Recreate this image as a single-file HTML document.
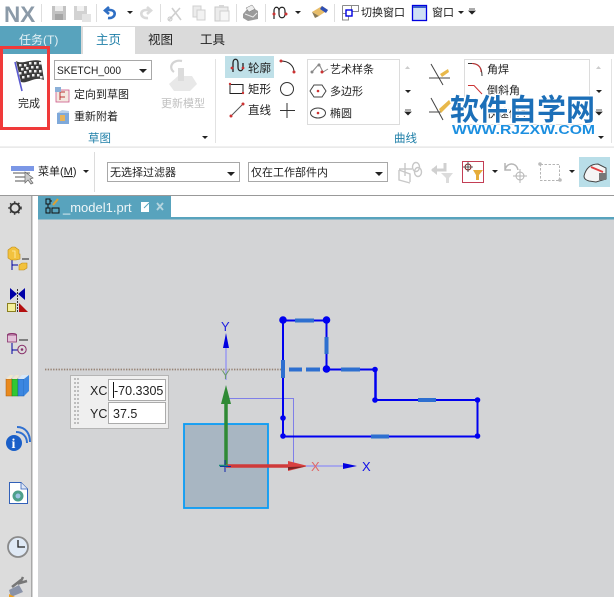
<!DOCTYPE html>
<html><head><meta charset="utf-8">
<style>
html,body{margin:0;padding:0;background:#fff;width:614px;height:597px;overflow:hidden}
svg{display:block;position:absolute;left:0;top:0}
text{font-family:"Liberation Sans","Noto Sans CJK SC",sans-serif;font-size:11px;fill:#222}
.g{fill:#c0c0c0}
.t{fill:#1f7fa8;font-size:11.500px}
.c{font-size:11px;fill:#222}
</style></head><body>
<svg width="614" height="597" viewBox="0 0 614 597">
<rect width="614" height="597" fill="#fff"/>
<!-- QAT -->
<text x="4" y="22" style="font-size:22.500px;font-weight:bold;fill:#8b9aa8">NX</text>
<g stroke="#dedede"><path d="M41.500 4V22M96.500 4V22M160.500 4V22M236.500 4V22M265.500 4V22M334.500 4V22"/></g>
<rect x="52" y="6" width="14" height="14" fill="#c2c2c2"/><rect x="55" y="6" width="8" height="5" fill="#ececec"/><rect x="55" y="14" width="8" height="6" fill="#a5a5a5"/>
<rect x="74" y="6" width="13" height="14" fill="#d2d2d2"/><rect x="77" y="6" width="7" height="5" fill="#f2f2f2"/><rect x="82" y="14" width="9" height="8" fill="#e4e4e4"/>
<path d="M108 18C116 19 117 10 110 10L106 10M109 7L105 10.500L109 14" fill="none" stroke="#2f6fc4" stroke-width="2.600"/>
<path d="M127 11l6 0l-3 3z" fill="#222"/>
<path d="M148 18C140 19 139 10 146 10L150 10M147 7L151 10.500L147 14" fill="none" stroke="#dadada" stroke-width="2.600"/>
<path d="M169 20L180 8M181 20L172 8" stroke="#cfcfcf" stroke-width="1.600"/><circle cx="170" cy="19" r="2" fill="none" stroke="#c8c8c8"/>
<rect x="193" y="6" width="8" height="11" fill="#ececec" stroke="#d0d0d0"/><rect x="197" y="10" width="8" height="10" fill="#f2f2f2" stroke="#d0d0d0"/>
<rect x="215" y="7" width="13" height="14" fill="#ececec" stroke="#c8c8c8"/><rect x="219" y="5" width="5" height="3" fill="#d8d8d8"/><rect x="220" y="11" width="9" height="10" fill="#f6f6f6" stroke="#d0d0d0"/>
<path d="M243 14L250 6L258 11L258 19L248 21L243 18Z" fill="#9a9a9a"/><path d="M246 8L252 5L255 9L249 12Z" fill="#eee" stroke="#777" stroke-width=".5"/><path d="M245 14L253 17L257 13" fill="none" stroke="#e8e8e8"/>
<path d="M274 19V11C274 6 279 6 279 11V14C279 19 285 19 285 14V11C285 6 279 6 279 11" fill="none" stroke="#222" stroke-width="1.200"/><circle cx="274" cy="14" r="1.500" fill="#c33"/><circle cx="286" cy="14" r="1.500" fill="#c33"/>
<path d="M295 11l6 0l-3 3z" fill="#222"/>
<path d="M312 12L322 6L328 10L319 16Z" fill="#e7bd6a"/><path d="M322 6L328 10L326 13L320 9Z" fill="#2e4fb5"/><path d="M312 12L319 16L315 18Z" fill="#8a7a55"/>
<path d="M342.500 5.500h9v5M351.500 5.500h7v6h-6M342.500 5.500v8h5M342.500 13.500v6.500h6v-5" fill="none" stroke="#8a8a8a"/><rect x="346" y="10" width="6" height="6" fill="#fff" stroke="#0000e0" stroke-width="1.400"/>
<text x="361" y="16" class="c">切换窗口</text>
<rect x="412.500" y="5.500" width="14" height="15" fill="#cfe0f5" stroke="#0000e0" stroke-width="1.300"/><rect x="413" y="6" width="13" height="2" fill="#3a5fcf"/>
<text x="432" y="16" class="c">窗口</text>
<path d="M458 11l6 0l-3 3z" fill="#222"/>
<path d="M469 9h6M469 11l6 0l-3 3z" stroke="#222" fill="#222" stroke-width=".8"/>
<!-- tab row -->
<rect y="26" width="614" height="28" fill="#dadada"/>
<rect y="26" width="81" height="28" fill="#58a3bd"/>
<text x="19" y="44" style="font-size:12px;fill:#e4f1f5">任务(T)</text>
<rect x="83" y="27" width="52" height="27" fill="#fff"/>
<text x="96" y="44" style="font-size:12.500px;fill:#1f7fa8">主页</text>
<text x="148" y="44" style="font-size:12.500px">视图</text>
<text x="200" y="44" style="font-size:12.500px">工具</text>
<!-- ribbon -->
<rect y="146.500" width="614" height="1.200" fill="#e2e2e2"/>
<path d="M215.500 59V143M611.500 59V143" stroke="#e2e2e2"/>
<!-- flag -->
<path d="M22 91L15 62" stroke="#5a5ad0" stroke-width="1.600"/>
<path d="M16 61C23 65 31 58 41 61L44 80C34 76 28 84 21 82Z" fill="#3c3c3c"/>
<g fill="#eee"><rect x="19" y="64" width="2.500" height="2.500"/><rect x="24" y="64" width="2.500" height="2.500"/><rect x="29" y="62" width="2.500" height="2.500"/><rect x="34" y="62" width="2.500" height="2.500"/><rect x="39" y="62" width="2.500" height="2.500"/><rect x="21" y="68" width="2.500" height="2.500"/><rect x="26" y="67" width="2.500" height="2.500"/><rect x="31" y="66" width="2.500" height="2.500"/><rect x="36" y="66" width="2.500" height="2.500"/><rect x="19" y="72" width="2.500" height="2.500"/><rect x="24" y="71" width="2.500" height="2.500"/><rect x="29" y="70" width="2.500" height="2.500"/><rect x="34" y="70" width="2.500" height="2.500"/><rect x="39" y="70" width="2.500" height="2.500"/><rect x="22" y="76" width="2.500" height="2.500"/><rect x="27" y="75" width="2.500" height="2.500"/><rect x="32" y="74" width="2.500" height="2.500"/><rect x="37" y="74" width="2.500" height="2.500"/><rect x="40" y="76" width="2.500" height="2.500"/></g>
<text x="18" y="107">完成</text>
<rect x="1.500" y="47.500" width="47" height="81" fill="none" stroke="#f03a3a" stroke-width="3"/>
<rect x="54.500" y="60.500" width="97" height="19" fill="#fff" stroke="#a8a8a8"/>
<text x="57" y="74" style="font-size:11px" textLength="64" lengthAdjust="spacingAndGlyphs">SKETCH_000</text>
<path d="M139 69l8 0l-4 4z" fill="#222"/>
<rect x="56" y="90" width="13" height="12" fill="#f4e8e0" stroke="#c58" stroke-width=".8"/><path d="M60 92h5M60 97h5M60 92v8" stroke="#b33" fill="none"/><rect x="55" y="87" width="6" height="5" fill="#8bb0d8"/>
<text x="74" y="98" class="c">定向到草图</text>
<rect x="57" y="113" width="12" height="11" fill="#7fa9da"/><path d="M57 113l5-3 7 1v2z" fill="#b8cfe8"/><rect x="60" y="115" width="5" height="6" fill="#e7b35a"/>
<text x="74" y="120" class="c">重新附着</text>
<path d="M169 84L178 76H192L197 84L190 91H174Z" fill="#e8e8e8"/><rect x="178" y="68" width="6" height="13" fill="#dcdcdc"/><path d="M182 61C172 59 168 68 174 72" fill="none" stroke="#d4d4d4" stroke-width="2.200"/>
<text x="161" y="107" class="g">更新模型</text>
<text x="88" y="142" class="t">草图</text>
<path d="M202 136l6 0l-3 3z" fill="#222"/>
<!-- curves -->
<rect x="225" y="56" width="49" height="22" fill="#bfe0e8"/>
<path d="M233 72V63C233 58 238 58 238 63V67C238 72 243 72 243 67V63" fill="none" stroke="#222" stroke-width="1.300"/><circle cx="232" cy="68" r="1.400" fill="#c33"/><circle cx="243" cy="68" r="1.400" fill="#c33"/>
<text x="248" y="72" style="font-size:11.500px">轮廓</text>
<path d="M281 61C289 61 294 66 294 72" fill="none" stroke="#222"/><circle cx="281" cy="61" r="1.500" fill="#c33"/><circle cx="294" cy="72" r="1.500" fill="#c33"/>
<rect x="230" y="84.500" width="13" height="9" fill="none" stroke="#222"/><circle cx="230" cy="84" r="1.200" fill="#c33"/><circle cx="243" cy="93" r="1.200" fill="#c33"/>
<text x="248" y="93" style="font-size:11.500px">矩形</text>
<circle cx="287" cy="89" r="6.500" fill="none" stroke="#333"/>
<path d="M232 115L242 105" stroke="#555"/><circle cx="231" cy="116" r="1.500" fill="#c33"/><circle cx="243" cy="104" r="1.500" fill="#c33"/>
<text x="248" y="114" style="font-size:11.500px">直线</text>
<path d="M287 103V118M280 110.500H295" stroke="#333"/>
<rect x="307.500" y="59.500" width="92" height="65" fill="#fff" stroke="#dcdcdc"/>
<path d="M312 72L319 64L323 72L328 69" fill="none" stroke="#888"/><circle cx="312" cy="72" r="1.500" fill="#888"/><circle cx="319" cy="65" r="1.500" fill="#888"/><circle cx="322" cy="72" r="1.500" fill="#c33"/>
<text x="330" y="73" class="c">艺术样条</text>
<path d="M310 91L314 85H322L326 91L322 97H314Z" fill="none" stroke="#444"/><circle cx="318" cy="91" r="1.300" fill="#c33"/>
<text x="330" y="95" class="c">多边形</text>
<ellipse cx="318" cy="113" rx="7.500" ry="5" fill="none" stroke="#444"/><circle cx="318" cy="113" r="1.300" fill="#c33"/>
<text x="330" y="117" class="c">椭圆</text>
<path d="M405 69l5 0l-2.500-3z" fill="#ccc"/>
<path d="M405 90l6 0l-3 3z" fill="#222"/>
<path d="M405 110h6M405 112l6 0l-3 3z" stroke="#222" fill="#222" stroke-width=".7"/>
<text x="394" y="142" class="t">曲线</text>
<path d="M431 64L443 85M429 78H450" stroke="#444"/><path d="M440 74L448 69L449 72L442 77Z" fill="#e8b84a"/>
<path d="M431 98L443 120M429 112H441" stroke="#444"/><path d="M439 109L449 100L451 103L441 113Z" fill="#e8b84a"/>
<rect x="464.500" y="59.500" width="125" height="65" fill="#fff" stroke="#dcdcdc"/>
<path d="M468 63.500h5C480 64 482 70 482 76" fill="none" stroke="#333"/><path d="M472 63.500C478 64 481 67 481 72" fill="none" stroke="#c33"/>
<text x="487" y="73" class="c">角焊</text>
<path d="M468 85.500h6L482 94" fill="none" stroke="#c33"/>
<text x="487" y="94" class="c">倒斜角</text>
<text x="487" y="117" class="c">快速修剪</text>
<path d="M596 69l5 0l-2.500-3z" fill="#ccc"/>
<path d="M596 90l6 0l-3 3z" fill="#222"/>
<path d="M596 110h6M596 112l6 0l-3 3z" stroke="#222" fill="#222" stroke-width=".7"/>
<path d="M598 136l6 0l-3 3z" fill="#222"/>
<!-- watermark -->
<text x="450" y="120" textLength="145" lengthAdjust="spacingAndGlyphs" style="font-size:29.500px;font-weight:bold;fill:#1c6fb8;stroke:#fff;stroke-width:2.500px;paint-order:stroke;font-family:'Noto Sans CJK SC',sans-serif">软件自学网</text>
<text x="452" y="134" textLength="143" lengthAdjust="spacingAndGlyphs" style="font-size:12.500px;font-weight:bold;fill:#1c8fe0;stroke:#fff;stroke-width:1.500px;paint-order:stroke">WWW.RJZXW.COM</text>
<!-- toolbar -->
<rect x="11" y="166" width="23" height="5" fill="#7b97e6"/>
<path d="M13 173H30M15 177H30M15 181H25" stroke="#777" stroke-width="1.300"/><path d="M25 172L25 183L28 180L31 184L33 183L30 179L33 178Z" fill="#ccc" stroke="#666" stroke-width=".7"/>
<text x="38" y="175" class="c">菜单(<tspan text-decoration="underline">M</tspan>)</text>
<path d="M83 170l6 0l-3 3z" fill="#222"/>
<path d="M94.500 152V192" stroke="#dcdcdc"/>
<rect x="107.500" y="162.500" width="132" height="19" fill="#fff" stroke="#a8a8a8"/>
<text x="110" y="176">无选择过滤器</text>
<path d="M227 172l8 0l-4 4z" fill="#222"/>
<rect x="248.500" y="162.500" width="139" height="19" fill="#fff" stroke="#a8a8a8"/>
<text x="251" y="176">仅在工作部件内</text>
<path d="M375 172l8 0l-4 4z" fill="#222"/>
<path d="M399 170L410 174L410 182M399 170V180L410 183M405 163V176M399 169H412" fill="none" stroke="#c8c8c8" stroke-width="1.400"/><ellipse cx="416" cy="167" rx="3.500" ry="4.500" fill="none" stroke="#c8c8c8" stroke-width="1.400"/><ellipse cx="418" cy="172" rx="3.500" ry="4.500" fill="none" stroke="#c8c8c8" stroke-width="1.400"/>
<path d="M445 163V170H432" fill="none" stroke="#d0d0d0" stroke-width="3"/><path d="M437 165L431 170L437 175Z" fill="#d0d0d0"/><path d="M441 173H453L449 178V183H446V178Z" fill="#dcdcdc"/>
<rect x="462.500" y="161.500" width="21" height="21" fill="#fff" stroke="#c33e55" stroke-width="1"/>
<circle cx="468" cy="167" r="3" fill="none" stroke="#822"/><path d="M468 162V172M463 167H473" stroke="#333" stroke-width=".8"/>
<path d="M473 170H483L479 175V180H476V175Z" fill="#e6ad3a"/>
<path d="M492 170l6 0l-3 3z" fill="#222"/>
<path d="M505 170C506 163 516 161 518 170M505 163V170H511" fill="none" stroke="#b5b5b5" stroke-width="1.500"/>
<circle cx="520" cy="176" r="4" fill="none" stroke="#b5b5b5"/><path d="M520 169V183M513 176H527" stroke="#b5b5b5"/>
<rect x="540.500" y="164.500" width="19" height="16" fill="none" stroke="#b5b5b5" stroke-dasharray="2.500 1.500"/><circle cx="540" cy="164" r="1.800" fill="#bbb"/><circle cx="560" cy="180" r="1.800" fill="#bbb"/>
<path d="M569 170l6 0l-3 3z" fill="#222"/>
<rect x="579" y="157" width="31" height="30" fill="#b9dee8"/>
<path d="M584 176C586 168 591 164 598 164L606 168V179L596 182L589 181C586 180 584 179 584 176Z" fill="#f5f5f5" stroke="#444"/><path d="M591 167L603 172" stroke="#e04040" stroke-width="1.800"/><rect x="599" y="173" width="7" height="7" fill="#777"/>
<path d="M0 195.500H614" stroke="#999"/>
<!-- side + viewport -->
<rect y="196" width="31" height="401" fill="#dcdcdc"/>
<rect x="31" y="196" width="1.500" height="401" fill="#a8a8a8"/>
<rect x="38" y="219" width="576" height="378" fill="#d3d4d6"/>
<rect x="38" y="217" width="576" height="2.500" fill="#58a3bd"/>
<rect x="38" y="196" width="133" height="21" fill="#58a3bd"/>
<path d="M46 199h4v5h-4zM46 208h4v5h-4zM52 208h7v5h-7zM48 204v4M50 201h2" fill="none" stroke="#111"/><path d="M53 205L58 199" stroke="#e0a030" stroke-width="2"/>
<text x="63" y="212" style="font-size:13px;fill:#eef6f8">_model1.prt</text>
<path d="M141 202h8v10h-8z" fill="#fff"/><path d="M144 208l5-5" stroke="#58a3bd"/>
<path d="M157 203L163 210M163 203L157 210" stroke="#b5d5df" stroke-width="1.800"/>
<!-- gear -->
<circle cx="15" cy="208" r="4.500" fill="none" stroke="#333" stroke-width="1.800"/><circle cx="15" cy="208" r="6" fill="none" stroke="#333" stroke-dasharray="1.500 3" stroke-width="1.500"/>
<!-- side icons -->
<path d="M12 260V270M12 265H18" fill="none" stroke="#0000a0"/><path d="M22 259H29" stroke="#222"/>
<path d="M8 250L12 247H15L19 250V254L20 254V259L16 260H11L8 258Z" fill="#f2c23e" stroke="#c08a10" stroke-width=".6"/>
<path d="M12 251H15V258" fill="none" stroke="#fff0b0" stroke-width=".8"/>
<path d="M19 265L22 263H27V268L24 270H19Z" fill="#f2c23e" stroke="#c08a10" stroke-width=".6"/>
<path d="M10 288L17 294L10 300ZM25 288L18 294L25 300Z" fill="#0000a8"/><path d="M17.500 289V312" stroke="#333" stroke-dasharray="2 1"/>
<rect x="7.500" y="303.500" width="8" height="8" fill="#f5f09a" stroke="#8a7f1f"/><path d="M19 303L28 312H19Z" fill="#b31010"/>
<ellipse cx="12" cy="335" rx="4.500" ry="1.500" fill="#d9a9c9" stroke="#88306a"/><rect x="7.500" y="335" width="9" height="7" fill="#e3c1d9" stroke="#88306a" stroke-width=".8"/>
<path d="M12 343V354M12 350H18" stroke="#0000a0" fill="none"/><path d="M19 340H28" stroke="#222"/>
<circle cx="22" cy="349.500" r="4.200" fill="none" stroke="#88306a"/><circle cx="22" cy="349.500" r="1.300" fill="#88306a"/>
<rect x="6" y="379" width="6" height="17" fill="#e98a1f" stroke="#a85a10" stroke-width=".5"/><rect x="12" y="379" width="6" height="17" fill="#32c832" stroke="#18801a" stroke-width=".5"/><rect x="18" y="379" width="6" height="17" fill="#3b86e0" stroke="#1a5aa8" stroke-width=".5"/>
<path d="M6 379L10 375H13L11 379ZM12 379L16 375H19L17 379Z" fill="#f0e6d0"/><path d="M18 379L22 375H29L24 379Z" fill="#d8e8f8"/><path d="M24 379L29 375V391L24 396Z" fill="#3b86e0"/>
<circle cx="14" cy="443" r="8" fill="#1a5fc8"/><text x="11.500" y="448" style="font-size:14px;font-weight:bold;fill:#fff;font-family:'Liberation Serif',serif">i</text>
<path d="M16 432C23 432 27 437 27 443M17 427C26 427 30 434 30 442" fill="none" stroke="#3070d0" stroke-width="2"/>
<path d="M9.500 482.500H21L27.500 489V503.500H9.500Z" fill="#fff" stroke="#3160b8"/><path d="M21 482.500V489H27.500" fill="#dfe7f5" stroke="#3160b8" stroke-width=".8"/>
<circle cx="18" cy="496" r="5.500" fill="#4d9f8a"/><circle cx="18" cy="496" r="2.500" fill="#9cc3e3"/>
<circle cx="18" cy="547" r="10" fill="#dfe9f5" stroke="#8a8a8a" stroke-width="1.800"/><path d="M18 540V547H25" fill="none" stroke="#222" stroke-width="1.300"/>
<path d="M12 587L21 580M23 577L20 583L27 581" fill="none" stroke="#777" stroke-width="2.500"/><path d="M9 590L19 585L23 592L11 597Z" fill="#8a93a8"/><path d="M9 594L15 597H9Z" fill="#f0a020"/>
<!-- viewport graphics -->
<path d="M45 369.500H283" stroke="#8d7565" stroke-width="1.800" stroke-dasharray="1.400 1.300" opacity=".85"/>
<rect x="70.500" y="375.500" width="98" height="53" fill="#efefef" stroke="#b5b5b5"/>
<g fill="#bdbdbd"><rect x="74" y="378" width="2" height="2"/><rect x="77" y="378" width="2" height="2"/><rect x="74" y="382" width="2" height="2"/><rect x="77" y="382" width="2" height="2"/><rect x="74" y="386" width="2" height="2"/><rect x="77" y="386" width="2" height="2"/><rect x="74" y="390" width="2" height="2"/><rect x="77" y="390" width="2" height="2"/><rect x="74" y="394" width="2" height="2"/><rect x="77" y="394" width="2" height="2"/><rect x="74" y="398" width="2" height="2"/><rect x="77" y="398" width="2" height="2"/><rect x="74" y="402" width="2" height="2"/><rect x="77" y="402" width="2" height="2"/><rect x="74" y="406" width="2" height="2"/><rect x="77" y="406" width="2" height="2"/><rect x="74" y="410" width="2" height="2"/><rect x="77" y="410" width="2" height="2"/><rect x="74" y="414" width="2" height="2"/><rect x="77" y="414" width="2" height="2"/><rect x="74" y="418" width="2" height="2"/><rect x="77" y="418" width="2" height="2"/><rect x="74" y="422" width="2" height="2"/><rect x="77" y="422" width="2" height="2"/></g>
<text x="90" y="395" style="font-size:12.500px">XC</text><text x="90" y="418" style="font-size:12.500px">YC</text>
<rect x="108.500" y="379.500" width="57" height="21" fill="#fff" stroke="#ababab"/><rect x="108.500" y="402.500" width="57" height="21" fill="#fff" stroke="#ababab"/>
<path d="M113.500 382V398" stroke="#111"/>
<text x="114" y="395" style="font-size:12.500px">-70.3305</text><text x="113" y="418" style="font-size:12.500px">37.5</text>
<rect x="184" y="424" width="84" height="84" fill="#a8b6c2" stroke="#0a9cf5" stroke-width="1.800"/>
<!-- sketch thin refs -->
<path d="M229 398.500H293.500V466" fill="none" stroke="#7f7fe8"/>
<path d="M226 348V380" stroke="#9a9af0" stroke-width="1.500"/>
<path d="M226 333L223 348H229Z" fill="#0000e0"/>
<text x="221" y="331" style="font-size:13px;fill:#2020e0">Y</text>
<text x="221.500" y="379" style="font-size:12px;fill:#6a9a6a">Y</text>
<path d="M226 466V395" stroke="#2f8a35" stroke-width="3.500"/><path d="M226 385L221 404H231Z" fill="#2f8a35"/>
<path d="M226 466H292" stroke="#cf3a3a" stroke-width="3.500"/><path d="M288 461L308 466L288 471Z" fill="#d94040"/><path d="M288 467L306 466.500L288 470Z" fill="#7c2424"/>
<path d="M220 466.500H231M225 460V472" stroke="#12a"/><path d="M219 465.500H228" stroke="#1a8a7a" stroke-width="1.500"/>
<path d="M306 466H345" stroke="#9a9af0" stroke-width="1.500"/><path d="M343 463L357 466L343 469Z" fill="#0000e0"/>
<text x="311" y="471" style="font-size:13px;fill:#e06a6a">X</text>
<text x="362" y="471" style="font-size:13px;fill:#1010e8">X</text>
<!-- sketch -->
<g fill="none" stroke="#0000f0" stroke-width="2">
<path d="M283 320.500V436.500H477.500V400H375.500V369.500H326.500V320.500H283"/>
<path d="M375.500 369.500V400" stroke-width="2.500"/>
</g>
<g stroke="#2d6fd0" stroke-width="4">
<path d="M295 320.500H314M326.500 337V354M283 360V378M289 369.500H302M306 369.500H320M341 369.500H360M418 400H436M371 436.500H389"/>
</g>
<g fill="#0000f0"><circle cx="283" cy="320" r="3.800"/><circle cx="326.500" cy="320" r="3.800"/><circle cx="326.500" cy="369" r="3.800"/><circle cx="375" cy="369.500" r="2.800"/><circle cx="375" cy="400" r="2.800"/><circle cx="477.500" cy="400" r="2.800"/><circle cx="477.500" cy="436" r="2.800"/><circle cx="283" cy="436" r="2.800"/><circle cx="283" cy="418" r="2.800"/></g>
</svg>
</body></html>
